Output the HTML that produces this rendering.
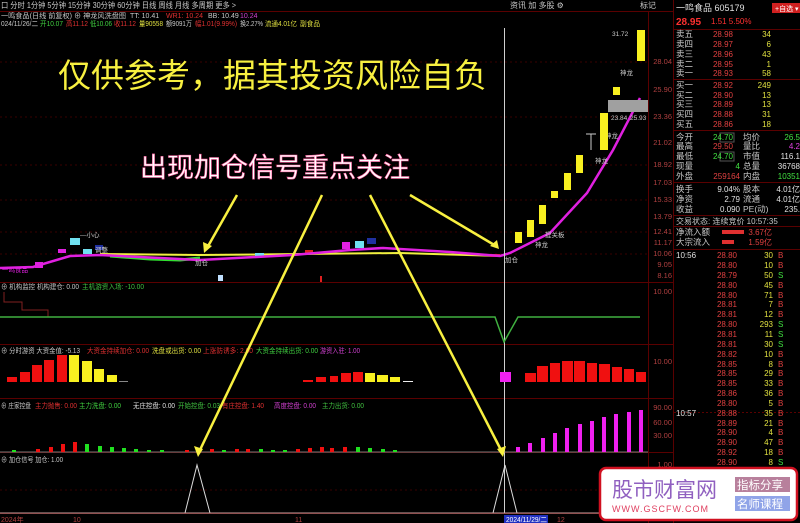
<!DOCTYPE html>
<html><head><meta charset="utf-8"><style>
html,body{margin:0;padding:0;background:#000;width:800px;height:523px;overflow:hidden}
svg{display:block}
text{font-family:"Liberation Sans","Noto Sans CJK SC",sans-serif}
</style></head><body>
<svg width="800" height="523" viewBox="0 0 800 523" xmlns="http://www.w3.org/2000/svg">
<rect width="800" height="523" fill="#000"/>
<g font-size="8" fill="#c8c8c8">
<text x="1" y="8" textLength="235" lengthAdjust="spacingAndGlyphs">口 分时  1分钟  5分钟  15分钟  30分钟  60分钟  日线  周线  月线  多周期  更多 &gt;</text>
<text x="510" y="8">资讯  加  多股  ⚙</text>
<text x="640" y="8">标记</text>
</g>
<line x1="0" y1="11.5" x2="673" y2="11.5" stroke="#5a0000"/>
<g font-size="7">
<text x="1" y="18" fill="#c8c8c8" textLength="125" lengthAdjust="spacingAndGlyphs">一鸣食品(日线 前复权) ⊕ 神龙风洗盘图</text>
<text x="130" y="18" fill="#c8c8c8">TT: 10.41</text>
<text x="166" y="18" fill="#e03030">WR1: 10.24</text>
<text x="208" y="18" fill="#c8c8c8">BB: 10.49</text>
<text x="240" y="18" fill="#d040d0">10.24</text>
<text x="1" y="26" fill="#c8c8c8" textLength="37" lengthAdjust="spacingAndGlyphs">024/11/26/二</text>
<text x="40" y="26" fill="#40d040" textLength="23" lengthAdjust="spacingAndGlyphs">开10.07</text>
<text x="66" y="26" fill="#e03030" textLength="22" lengthAdjust="spacingAndGlyphs">高11.12</text>
<text x="90" y="26" fill="#40d040" textLength="22" lengthAdjust="spacingAndGlyphs">低10.06</text>
<text x="114" y="26" fill="#e03030" textLength="22" lengthAdjust="spacingAndGlyphs">收11.12</text>
<text x="139" y="26" fill="#e0e040" textLength="24" lengthAdjust="spacingAndGlyphs">量90558</text>
<text x="166" y="26" fill="#c8c8c8" textLength="26" lengthAdjust="spacingAndGlyphs">额9091万</text>
<text x="195" y="26" fill="#e03030" textLength="42" lengthAdjust="spacingAndGlyphs">幅1.01(9.99%)</text>
<text x="240" y="26" fill="#c8c8c8" textLength="23" lengthAdjust="spacingAndGlyphs">换2.27%</text>
<text x="265" y="26" fill="#e0e040" textLength="32" lengthAdjust="spacingAndGlyphs">流通4.01亿</text>
<text x="300" y="26" fill="#e0e040" textLength="20" lengthAdjust="spacingAndGlyphs">副食品</text>
</g>
<g stroke="#5a0000" stroke-width="1">
<line x1="0" y1="282.5" x2="673" y2="282.5"/>
<line x1="0" y1="344.5" x2="673" y2="344.5"/>
<line x1="0" y1="398.5" x2="673" y2="398.5"/>
<line x1="0" y1="452.5" x2="673" y2="452.5"/>
<line x1="0" y1="513.5" x2="673" y2="513.5"/>
<line x1="648.5" y1="12" x2="648.5" y2="523"/>
<line x1="673.5" y1="0" x2="673.5" y2="523"/>
</g>
<g stroke="#3a0000" stroke-dasharray="2,3">
<line x1="0" y1="62" x2="648" y2="62"/><line x1="0" y1="117" x2="648" y2="117"/>
<line x1="0" y1="165" x2="648" y2="165"/><line x1="0" y1="200" x2="648" y2="200"/>
<line x1="0" y1="232" x2="648" y2="232"/><line x1="0" y1="254" x2="648" y2="254"/>
<line x1="0" y1="490" x2="648" y2="490"/>
</g>
<g font-size="7.5" fill="#b04040" text-anchor="end">
<text x="672" y="64">28.04</text><text x="672" y="92">25.90</text><text x="672" y="119">23.36</text>
<text x="672" y="145">21.02</text><text x="672" y="167">18.92</text><text x="672" y="185">17.03</text>
<text x="672" y="202">15.33</text><text x="672" y="219">13.79</text><text x="672" y="234">12.41</text>
<text x="672" y="245">11.17</text><text x="672" y="256">10.06</text><text x="672" y="267">9.05</text>
<text x="672" y="278">8.16</text><text x="672" y="294">10.00</text><text x="672" y="364">10.00</text>
<text x="672" y="410">90.00</text><text x="672" y="425">60.00</text><text x="672" y="438">30.00</text>
<text x="672" y="467">1.00</text>
</g>
<polyline points="100,254 200,255 300,254 400,253 500,256" fill="none" stroke="#f0f040" stroke-width="2"/>
<polyline points="110,256 150,259 180,260 200,258" fill="none" stroke="#30e030" stroke-width="3"/>
<rect x="70" y="238" width="10" height="7" fill="#70e0f0"/>
<rect x="83" y="249" width="9" height="5" fill="#70e0f0"/>
<rect x="35" y="262" width="8" height="6" fill="#e020e0"/>
<rect x="58" y="249" width="8" height="4" fill="#e020e0"/>
<rect x="255" y="253" width="9" height="3" fill="#70e0f0"/>
<rect x="342" y="242" width="8" height="7" fill="#e020e0"/>
<rect x="355" y="241" width="9" height="7" fill="#70e0f0"/>
<rect x="367" y="238" width="9" height="6" fill="#2030a0"/>
<rect x="95" y="245" width="8" height="5" fill="#2030a0"/>
<rect x="305" y="250" width="8" height="3" fill="#e02020"/>
<rect x="490" y="254" width="10" height="3" fill="#e02020"/>
<polyline points="0,268 33,267 70,256 100,255 200,260 293,255 350,250 383,248 450,252 500,256 510,253 550,233 587,193 613,150 640,98" fill="none" stroke="#e020e0" stroke-width="2.5"/>
<g font-size="6.5" fill="#c8c8c8">
<text x="80" y="237">—小心</text><text x="95" y="252">调整</text><text x="195" y="265">加仓</text>
<text x="505" y="262">加仓</text><text x="535" y="247">神龙</text><text x="545" y="237">提关板</text>
<text x="595" y="163">神龙</text><text x="605" y="138">神龙</text><text x="620" y="75">神龙</text>
<text x="611" y="120">23.84</text><text x="630" y="120">25.93</text><text x="612" y="36">31.72</text>
</g>
<text x="2" y="272" font-size="6.5" fill="#e020e0">一鸣食品</text>
<rect x="218" y="275" width="5" height="6" fill="#c0e0ff"/>
<rect x="320" y="276" width="2" height="6" fill="#e02020"/>
<rect x="608" y="100" width="40" height="12" fill="#a0a0a0"/>
<g fill="#f8f020">
<rect x="515" y="232" width="7" height="11"/><rect x="527" y="220" width="7" height="17"/>
<rect x="539" y="205" width="7" height="19"/><rect x="551" y="191" width="7" height="7"/>
<rect x="564" y="173" width="7" height="17"/><rect x="576" y="155" width="7" height="18"/>
<rect x="600" y="113" width="8" height="37"/><rect x="613" y="87" width="7" height="8"/>
<rect x="637" y="30" width="8" height="31"/>
</g>
<line x1="591" y1="134" x2="591" y2="150" stroke="#ccc"/>
<line x1="586" y1="134" x2="596" y2="134" stroke="#ccc"/>
<line x1="504.5" y1="28" x2="504.5" y2="513" stroke="#d0d0d0"/>
<g font-size="7" lengthAdjust="spacingAndGlyphs">
<text x="1" y="289" fill="#c8c8c8" textLength="78" lengthAdjust="spacingAndGlyphs">⊕ 机构监控   机构建仓: 0.00</text>
<text x="82" y="289" fill="#40c040" textLength="62" lengthAdjust="spacingAndGlyphs">主机游资入场: -10.00</text>
<text x="1" y="353" fill="#c8c8c8" textLength="79" lengthAdjust="spacingAndGlyphs">⊕ 分时游资   大资金值: -5.13</text>
<text x="87" y="353" fill="#e03030" textLength="62" lengthAdjust="spacingAndGlyphs">大资金持续加仓: 0.00</text>
<text x="152" y="353" fill="#e0e040" textLength="49" lengthAdjust="spacingAndGlyphs">洗盘或出货: 0.00</text>
<text x="203" y="353" fill="#e03030" textLength="50" lengthAdjust="spacingAndGlyphs">上涨防诱多: 2.00</text>
<text x="256" y="353" fill="#40d040" textLength="62" lengthAdjust="spacingAndGlyphs">大资金持续出货: 0.00</text>
<text x="320" y="353" fill="#d040d0" textLength="40" lengthAdjust="spacingAndGlyphs">游资入驻: 1.00</text>
<text x="1" y="408" fill="#c8c8c8" textLength="30" lengthAdjust="spacingAndGlyphs">⊕ 庄家控盘</text>
<text x="35" y="408" fill="#e03030" textLength="42" lengthAdjust="spacingAndGlyphs">主力抛售: 0.00</text>
<text x="79" y="408" fill="#40d040" textLength="42" lengthAdjust="spacingAndGlyphs">主力洗盘: 0.00</text>
<text x="133" y="408" fill="#e0e0e0" textLength="42" lengthAdjust="spacingAndGlyphs">无庄控盘: 0.00</text>
<text x="178" y="408" fill="#40c040" textLength="42" lengthAdjust="spacingAndGlyphs">开始控盘: 0.03</text>
<text x="222" y="408" fill="#e03030" textLength="42" lengthAdjust="spacingAndGlyphs">有庄控盘: 1.40</text>
<text x="274" y="408" fill="#d040d0" textLength="42" lengthAdjust="spacingAndGlyphs">高度控盘: 0.00</text>
<text x="322" y="408" fill="#40c040" textLength="42" lengthAdjust="spacingAndGlyphs">主力出货: 0.00</text>
<text x="1" y="462" fill="#c8c8c8" textLength="62" lengthAdjust="spacingAndGlyphs">⊕ 加仓信号  加仓: 1.00</text>
</g>
<polyline points="4,292 4,302 10,302" fill="none" stroke="#802020"/>
<polyline points="4,302 22,302 22,310 48,310 48,317" fill="none" stroke="#802020"/>
<polyline points="0,317 495,317 504,342 518,317 640,317" fill="none" stroke="#40b040" stroke-width="1.5"/>
<g fill="#f01010">
<rect x="7" y="377" width="10" height="5"/><rect x="20" y="372" width="10" height="10"/>
<rect x="32" y="365" width="10" height="17"/><rect x="44" y="360" width="10" height="22"/>
<rect x="57" y="355" width="10" height="27"/>
<rect x="303" y="380" width="10" height="2"/><rect x="316" y="377" width="10" height="5"/>
<rect x="330" y="376" width="8" height="6"/><rect x="341" y="373" width="10" height="9"/>
<rect x="353" y="372" width="10" height="10"/>
<rect x="525" y="373" width="11" height="9"/><rect x="537" y="366" width="11" height="16"/>
<rect x="550" y="363" width="10" height="19"/><rect x="562" y="361" width="11" height="21"/>
<rect x="574" y="361" width="11" height="21"/><rect x="587" y="363" width="10" height="19"/>
<rect x="599" y="364" width="11" height="18"/><rect x="612" y="367" width="10" height="15"/>
<rect x="624" y="369" width="10" height="13"/><rect x="636" y="372" width="10" height="10"/>
</g>
<g fill="#f8f020">
<rect x="69" y="355" width="10" height="27"/><rect x="82" y="361" width="10" height="21"/>
<rect x="94" y="369" width="10" height="13"/><rect x="107" y="375" width="10" height="7"/>
<rect x="365" y="373" width="10" height="9"/><rect x="377" y="375" width="11" height="7"/>
<rect x="390" y="377" width="10" height="5"/>
</g>
<rect x="119" y="381" width="9" height="1" fill="#888"/>
<rect x="403" y="381" width="10" height="1" fill="#eee"/>
<rect x="500" y="372" width="11" height="10" fill="#f020f0"/>
<line x1="0" y1="452" x2="648" y2="452" stroke="#777"/>
<g fill="#f01010">
<rect x="36" y="449" width="4" height="3"/><rect x="49" y="447" width="4" height="5"/>
<rect x="61" y="444" width="4" height="8"/><rect x="73" y="442" width="4" height="10"/>
<rect x="185" y="450" width="4" height="2"/><rect x="210" y="449" width="4" height="3"/>
<rect x="235" y="449" width="4" height="3"/><rect x="246" y="449" width="4" height="3"/>
<rect x="296" y="449" width="4" height="3"/><rect x="308" y="448" width="4" height="4"/>
<rect x="320" y="447" width="4" height="5"/><rect x="330" y="448" width="4" height="4"/>
<rect x="343" y="447" width="4" height="5"/>
</g>
<g fill="#20e020">
<rect x="12" y="450" width="4" height="2"/><rect x="85" y="444" width="4" height="8"/>
<rect x="98" y="446" width="4" height="6"/><rect x="110" y="447" width="4" height="5"/>
<rect x="122" y="448" width="4" height="4"/><rect x="134" y="449" width="4" height="3"/>
<rect x="147" y="450" width="4" height="2"/><rect x="160" y="450" width="4" height="2"/>
<rect x="222" y="450" width="4" height="2"/><rect x="259" y="449" width="4" height="3"/>
<rect x="271" y="450" width="4" height="2"/><rect x="283" y="450" width="4" height="2"/>
<rect x="356" y="447" width="4" height="5"/><rect x="368" y="448" width="4" height="4"/>
<rect x="381" y="449" width="4" height="3"/><rect x="393" y="450" width="4" height="2"/>
</g>
<g fill="#f020f0">
<rect x="516" y="447" width="4" height="5"/><rect x="528" y="443" width="4" height="9"/>
<rect x="541" y="438" width="4" height="14"/><rect x="553" y="433" width="4" height="19"/>
<rect x="565" y="428" width="4" height="24"/><rect x="578" y="424" width="4" height="28"/>
<rect x="590" y="421" width="4" height="31"/><rect x="602" y="417" width="4" height="35"/>
<rect x="614" y="414" width="4" height="38"/><rect x="627" y="412" width="4" height="40"/>
<rect x="639" y="410" width="4" height="42"/>
</g>
<polyline points="185,513 197,465 210,513" fill="none" stroke="#ddd"/>
<polyline points="493,513 505,465 517,513" fill="none" stroke="#ddd"/>
<line x1="0" y1="513" x2="648" y2="513" stroke="#c8a0a0"/>
<g font-size="7" fill="#b04040">
<text x="1" y="522">2024年</text><text x="73" y="522">10</text><text x="295" y="522">11</text><text x="557" y="522">12</text>
</g>
<rect x="504" y="515" width="44" height="8" fill="#2030c0"/>
<text x="506" y="522" font-size="7" fill="#fff" textLength="41" lengthAdjust="spacingAndGlyphs">2024/11/29/二</text>
<g stroke="#f8f040" stroke-width="2.5" fill="none">
<line x1="237" y1="195" x2="207" y2="248"/>
<line x1="322" y1="195" x2="199" y2="452"/>
<line x1="370" y1="195" x2="502" y2="452"/>
<line x1="410" y1="195" x2="496" y2="246"/>
</g>
<g fill="#f8f040">
<polygon points="204,253 203,242 212,246"/>
<polygon points="198,457 194,446 203,449"/>
<polygon points="503,457 497,449 506,446"/>
<polygon points="499,249 490,246 497,240"/>
</g>
<text x="58" y="87" font-size="33" fill="#f8f040">仅供参考，据其投资风险自负</text>
<text x="140" y="177" font-size="27" fill="#fff" stroke="#ff60a0" stroke-width="0.6">出现加仓信号重点关注</text>
<text x="676" y="11" font-size="9" fill="#e0e0e0">一鸣食品 605179</text>
<rect x="772" y="3" width="28" height="10" fill="#d02020"/>
<text x="775" y="11" font-size="7" fill="#fff">+自选 ▾</text>
<text x="676" y="25" font-size="10" fill="#ff3030" font-weight="bold">28.95</text>
<text x="711" y="24" font-size="8" fill="#ff3030">1.51  5.50%</text>
<g stroke="#5a0000">
<line x1="674" y1="29.5" x2="800" y2="29.5"/><line x1="674" y1="79.5" x2="800" y2="79.5"/>
<line x1="674" y1="130.5" x2="800" y2="130.5"/><line x1="674" y1="182.5" x2="800" y2="182.5"/>
<line x1="674" y1="215.5" x2="800" y2="215.5"/><line x1="674" y1="226.5" x2="800" y2="226.5"/>
<line x1="674" y1="249.5" x2="800" y2="249.5"/><line x1="674" y1="412.5" x2="800" y2="412.5" stroke-dasharray="2,2"/>
</g>
<g font-size="8.5" fill="#c8c8c8">
<text x="676" y="37">卖五</text><text x="676" y="47">卖四</text><text x="676" y="57">卖三</text><text x="676" y="67">卖二</text><text x="676" y="76">卖一</text>
<text x="676" y="88">买一</text><text x="676" y="98">买二</text><text x="676" y="107">买三</text><text x="676" y="117">买四</text><text x="676" y="127">买五</text>
<text x="676" y="140">今开</text><text x="676" y="149">最高</text><text x="676" y="159">最低</text><text x="676" y="169">现量</text><text x="676" y="179">外盘</text>
<text x="743" y="140">均价</text><text x="743" y="149">量比</text><text x="743" y="159">市值</text><text x="743" y="169">总量</text><text x="743" y="179">内盘</text>
<text x="676" y="192">换手</text><text x="676" y="202">净资</text><text x="676" y="212">收益</text>
<text x="743" y="192">股本</text><text x="743" y="202">流通</text><text x="743" y="212">PE(动)</text>
<text x="676" y="224" font-size="8">交易状态: 连续竞价 10:57:35</text>
<text x="676" y="235">净流入额</text><text x="676" y="245">大宗流入</text>
</g>
<g font-size="8" fill="#e04040" text-anchor="end">
<text x="733" y="37">28.98</text><text x="733" y="47">28.97</text><text x="733" y="57">28.96</text><text x="733" y="67">28.95</text><text x="733" y="76">28.93</text>
<text x="733" y="88">28.92</text><text x="733" y="98">28.90</text><text x="733" y="107">28.89</text><text x="733" y="117">28.88</text><text x="733" y="127">28.86</text>
<text x="733" y="149">29.50</text><text x="772" y="235">3.67亿</text><text x="772" y="245">1.59亿</text>
</g>
<rect x="720" y="133" width="14" height="9" fill="none" stroke="#555"/>
<rect x="720" y="152" width="14" height="9" fill="none" stroke="#555"/>
<g font-size="8" fill="#40e040" text-anchor="end">
<text x="733" y="140">24.70</text><text x="733" y="159">24.70</text><text x="740" y="169">4</text>
<text x="800" y="140">26.5</text><text x="800" y="179">10351</text>
</g>
<g font-size="8" fill="#e0e040" text-anchor="end">
<text x="771" y="37">34</text><text x="771" y="47">6</text><text x="771" y="57">43</text><text x="771" y="67">1</text><text x="771" y="76">58</text>
<text x="771" y="88">249</text><text x="771" y="98">13</text><text x="771" y="107">13</text><text x="771" y="117">31</text><text x="771" y="127">18</text>
</g>
<g font-size="8" fill="#e0e0e0" text-anchor="end">
<text x="740" y="179" fill="#e04040">259164</text>
<text x="800" y="159">116.1</text><text x="800" y="169">36768</text>
<text x="740" y="192">9.04%</text><text x="740" y="202">2.79</text><text x="740" y="212">0.090</text>
<text x="800" y="192">4.01亿</text><text x="800" y="202">4.01亿</text><text x="800" y="212">235.</text>
<text x="800" y="149" fill="#e040e0">4.2</text>
</g>
<rect x="722" y="230" width="22" height="4" fill="#e03030"/>
<rect x="722" y="240" width="12" height="4" fill="#e03030"/>
<g font-size="8">
<text x="676" y="258" fill="#e0e0e0">10:56</text>
<text x="676" y="416" fill="#e0e0e0">10:57</text>
</g>
<g font-size="8" text-anchor="end" fill="#e04040">
<text x="737" y="258">28.80</text><text x="737" y="268">28.80</text><text x="737" y="278">28.79</text><text x="737" y="288">28.80</text>
<text x="737" y="298">28.80</text><text x="737" y="307">28.81</text><text x="737" y="317">28.81</text><text x="737" y="327">28.80</text>
<text x="737" y="337">28.81</text><text x="737" y="347">28.81</text><text x="737" y="357">28.82</text><text x="737" y="367">28.85</text>
<text x="737" y="376">28.85</text><text x="737" y="386">28.85</text><text x="737" y="396">28.86</text><text x="737" y="406">28.80</text>
<text x="737" y="416">28.88</text><text x="737" y="426">28.89</text><text x="737" y="435">28.90</text><text x="737" y="445">28.90</text>
<text x="737" y="455">28.92</text><text x="737" y="465">28.90</text>
</g>
<g font-size="8" text-anchor="end" fill="#e0e040">
<text x="773" y="258">30</text><text x="773" y="268">10</text><text x="773" y="278">50</text><text x="773" y="288">45</text>
<text x="773" y="298">71</text><text x="773" y="307">7</text><text x="773" y="317">12</text><text x="773" y="327">293</text>
<text x="773" y="337">11</text><text x="773" y="347">30</text><text x="773" y="357">10</text><text x="773" y="367">8</text>
<text x="773" y="376">29</text><text x="773" y="386">33</text><text x="773" y="396">36</text><text x="773" y="406">5</text>
<text x="773" y="416">35</text><text x="773" y="426">21</text><text x="773" y="435">4</text><text x="773" y="445">47</text>
<text x="773" y="455">18</text><text x="773" y="465">8</text>
</g>
<g font-size="8">
<g fill="#e04040"><text x="778" y="258">B</text><text x="778" y="268">B</text><text x="778" y="288">B</text><text x="778" y="298">B</text><text x="778" y="307">B</text><text x="778" y="317">B</text><text x="778" y="357">B</text><text x="778" y="367">B</text><text x="778" y="376">B</text><text x="778" y="386">B</text><text x="778" y="396">B</text><text x="778" y="406">B</text><text x="778" y="416">B</text><text x="778" y="426">B</text><text x="778" y="435">B</text><text x="778" y="445">B</text><text x="778" y="455">B</text></g>
<g fill="#40e040"><text x="778" y="278">S</text><text x="778" y="327">S</text><text x="778" y="337">S</text><text x="778" y="347">S</text><text x="778" y="465">S</text></g>
</g>
<rect x="600" y="468" width="197" height="52" rx="6" fill="#fff" stroke="#d01020" stroke-width="2.5"/>
<text x="612" y="497" font-size="21" fill="#9060c0" font-family="Liberation Serif, Noto Serif CJK SC, serif">股市财富网</text>
<text x="612" y="512" font-size="9" fill="#e04060" font-family="Liberation Serif, serif" letter-spacing="1">WWW.GSCFW.COM</text>
<rect x="735" y="477" width="55" height="15" fill="#b8809c"/>
<text x="737" y="489" font-size="11.5" fill="#fff">指标分享</text>
<rect x="735" y="496" width="55" height="15" fill="#90a4e8"/>
<text x="737" y="508" font-size="11.5" fill="#fff">名师课程</text>
</svg>
</body></html>
